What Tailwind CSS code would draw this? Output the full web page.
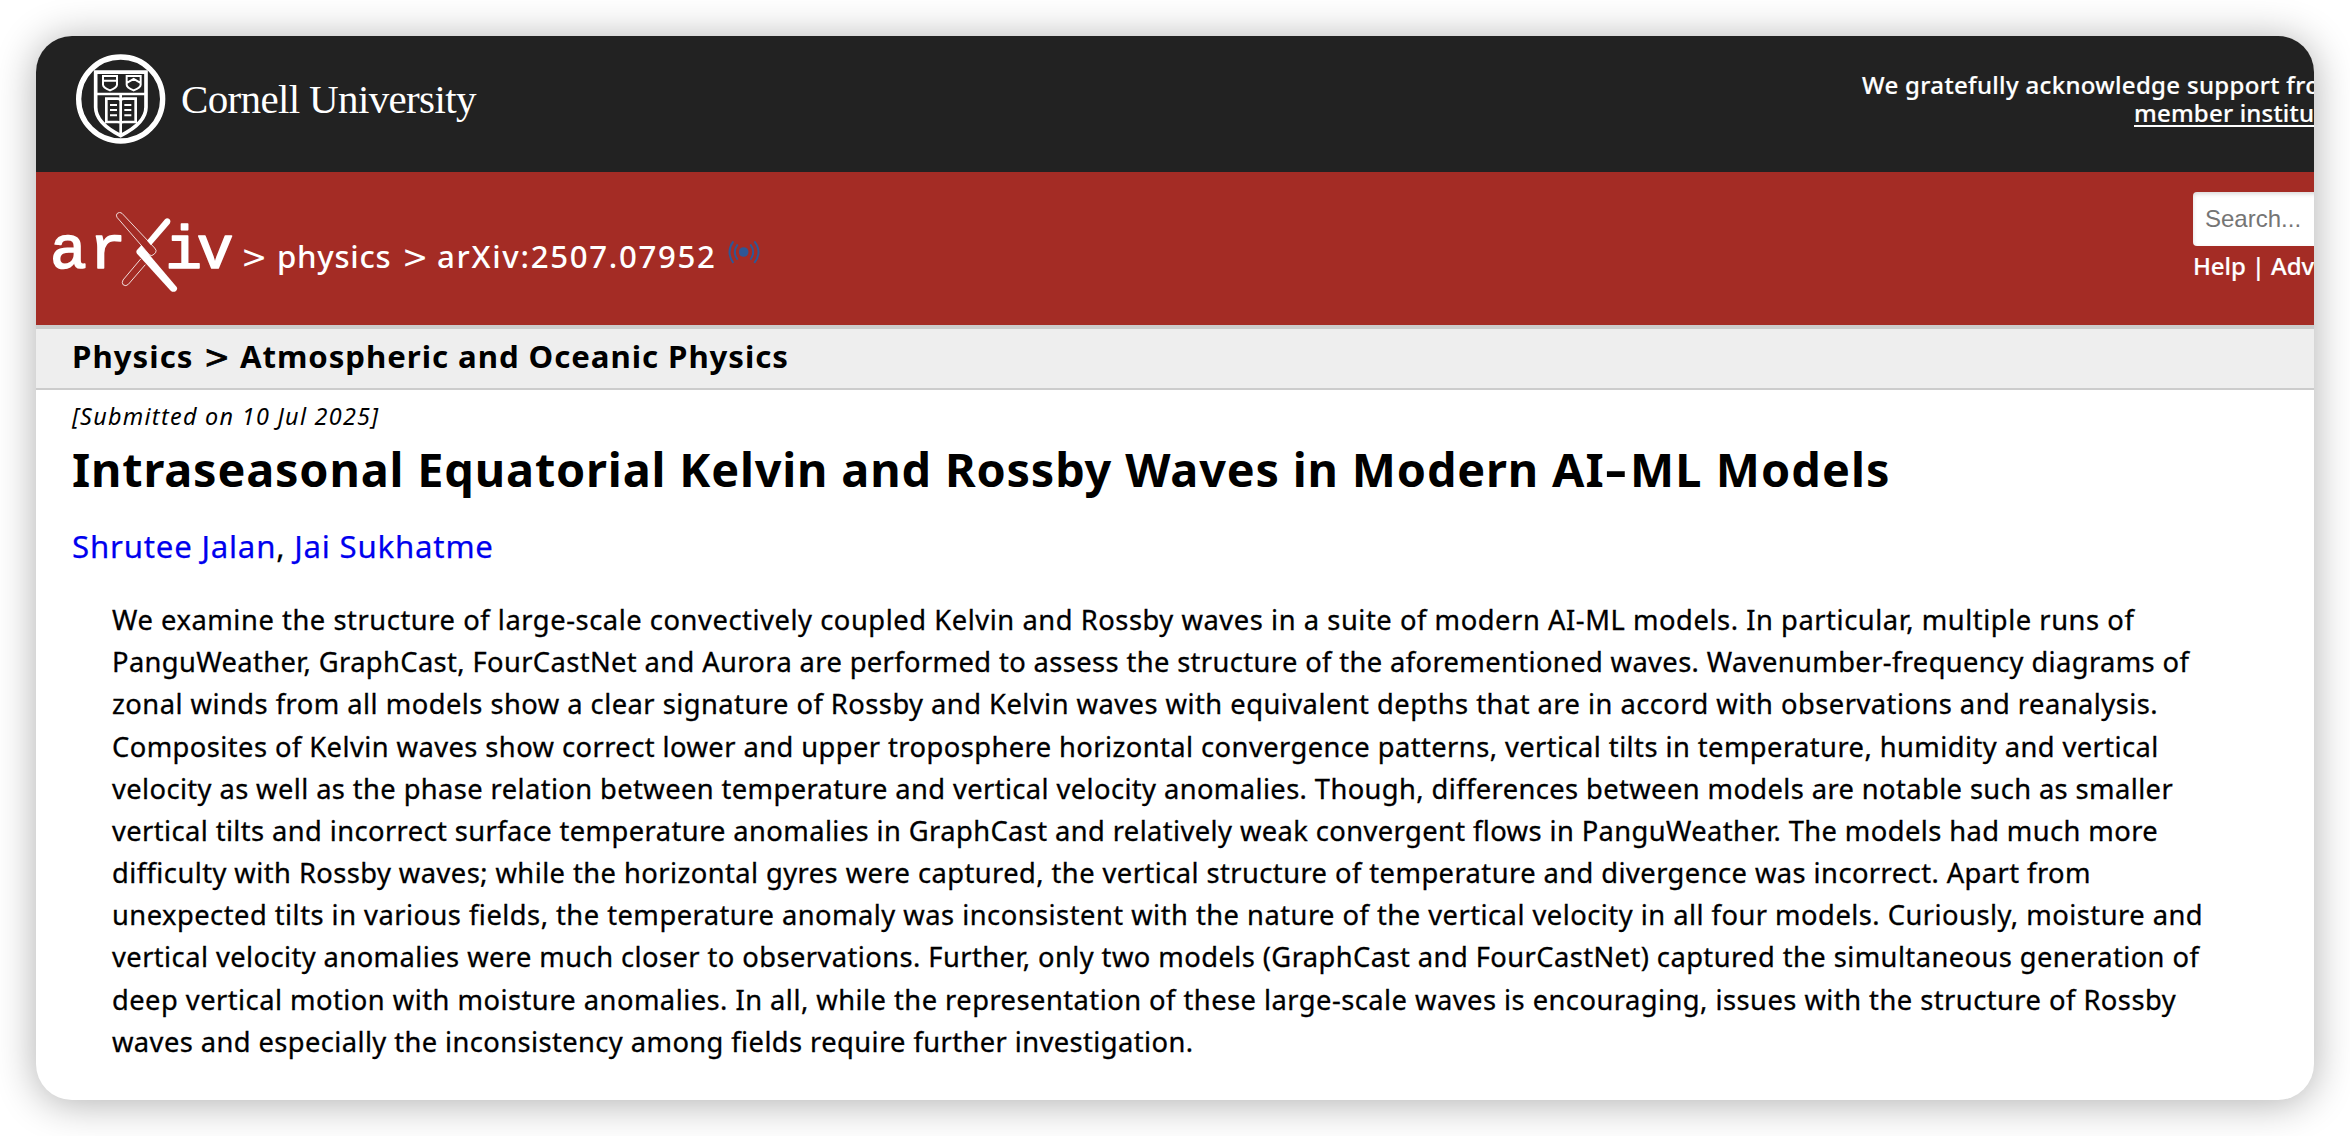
<!DOCTYPE html>
<html lang="en">
<head>
<meta charset="utf-8">
<title>[2507.07952] Intraseasonal Equatorial Kelvin and Rossby Waves in Modern AI-ML Models</title>
<script src="https://cdn.jsdelivr.net/npm/@tailwindcss/browser@4"></script>
</head>
<body class="bg-white w-[2350px] h-[1136px] p-9 overflow-hidden font-['Noto_Sans','Open_Sans',sans-serif] text-black">
<main class="w-[2278px] h-[1064px] rounded-[36px] overflow-hidden bg-white shadow-[0_3px_40px_rgba(0,0,0,0.32)]">

  <!-- University banner -->
  <header class="h-[136px] bg-[#222222] text-white flex justify-between items-start">
    <a class="flex items-start pl-10 pt-[18px]">
      <svg class="w-[90px] h-[90px]" viewBox="0 0 270 270" fill="none" stroke="#fff">
        <circle cx="134" cy="135" r="126" stroke-width="16"/>
        <path stroke-width="11" d="M59 54.500H210V160C210 195 180 222 134 245C88 222 59 195 59 160Z"/>
        <path stroke-width="8" d="M59 120H210M134 122V245"/>
        <path stroke-width="6" d="M81 66H123V92C123 99 112 105 102 109C92 105 81 99 81 92ZM81 80H123M152 66H194V92C194 99 183 105 173 109C163 105 152 99 152 92ZM154 86L173 75L192 86"/>
        <path stroke-width="8" d="M91 134H124Q134 134 134 141Q134 134 144 134H179V204H144Q134 204 134 208Q134 204 124 204H91Z"/>
        <path stroke-width="6" d="M102 153H123M102 168H123M102 184H123M145 153H166M145 168H166M145 184H166"/>
      </svg>
      <span class="mt-[25px] ml-[15px] text-[41px] leading-10 tracking-[-0.640px] font-['Liberation_Serif',serif]">Cornell University</span>
    </a>
    <div class="w-[452px] pt-[35px] text-2xl leading-7 whitespace-nowrap font-medium [-webkit-text-stroke:0.2px_#fff]">
      <p class="tracking-[0.330px]">We gratefully acknowledge support from</p>
      <p class="pl-[272px] leading-7"><a class="tracking-[0.2px] underline decoration-2 underline-offset-[3px] [text-decoration-skip-ink:none]">member institutions</a></p>
    </div>
  </header>

  <!-- Site bar -->
  <div class="h-[153px] bg-[#a42c25] text-white flex justify-between items-start">
    <div class="flex items-start pl-4 pt-10">
      <svg class="w-[185px] h-[84px]" viewBox="60 66 555 252" fill="#fff">
        <text y="233" x="54 172 400 494" font-family="'Liberation Mono', monospace" font-size="184" stroke="#fff" stroke-width="5" stroke-linejoin="round">ariv</text>
        <path d="M345 152L399 88Q405 82 412 87Q418 93 413 101L357 166Z"/>
        <path d="M328 166L434 291Q438 298 431 304Q423 308 416 302L315 191Q311 185 315 180Z"/>
        <path fill="none" stroke="#fff" stroke-width="2.500" d="M270 70L368 174Q375 181 371 188L363 195Q358 199 352 194L255 82Q251 75 256 70Q263 64 270 70ZM326 207L273 270Q268 279 274 285Q282 290 289 283L340 224"/>
      </svg>
      <div class="flex items-baseline pt-[24px] text-[31.200px] leading-10 font-medium">
        <span class="font-['DejaVu_Sans'] font-normal ml-[4px] w-[36px]">&gt;</span>
        <a class="w-[125px] tracking-[0.7px]">physics</a>
        <span class="font-['DejaVu_Sans'] font-normal w-[35px]">&gt;</span>
        <span class="tracking-[1.700px]">arXiv:2507.07952</span>
      </div>
      <svg class="mt-[28px] ml-[10px] w-[34px] h-[24px]" viewBox="980 119 102 72" fill="none" stroke="#2f5795" stroke-width="6">
        <circle cx="1030" cy="155" r="14.500" fill="#2f5795" stroke="none"/>
        <path d="M999 123Q976 155 999 188M1012 132Q995 155 1012 178M1062 123Q1087 155 1062 188M1050 132Q1067 155 1050 178"/>
      </svg>
    </div>
    <div class="w-[121px] pt-5 whitespace-nowrap">
      <div class="w-[320px] h-[54px] rounded-[4px] bg-white pl-3 shadow-[inset_0_2px_4px_rgba(10,10,10,0.15)] text-[#757575] text-2xl leading-[53px] font-['Liberation_Sans',sans-serif]">Search...</div>
      <p class="mt-[6px] text-2xl leading-7 font-medium tracking-[-0.1px] [-webkit-text-stroke:0.2px_#fff]">Help | Advanced Search</p>
    </div>
  </div>

  <!-- Subject -->
  <div class="h-[65px] border-t-4 border-b-2 border-[#cccccc] bg-[#eeeeee] pl-9">
    <h1 class="flex items-baseline text-[31.200px] leading-[54px] font-bold whitespace-pre"><span class="tracking-[1.050px]">Physics </span><span class="mx-px font-['DejaVu_Sans'] font-normal [-webkit-text-stroke:0.8px_#000]">&gt;</span><span class="tracking-[0.950px]"> Atmospheric and Oceanic Physics</span></h1>
  </div>

  <!-- Paper -->
  <article class="pt-3 pl-9 whitespace-nowrap">
    <p class="text-[23.400px] leading-7 italic tracking-[1.280px]">[Submitted on 10 Jul 2025]</p>
    <h2 class="mt-[9px] text-[46.800px] leading-[60px] font-bold"><span class="tracking-[0.830px]">Intraseasonal Equatorial Kelvin and Rossby Waves in Modern </span><span class="tracking-[1.100px]">AI<span class="inline-block origin-left scale-x-[1.450] mr-[9px]">-</span>ML Models</span></h2>
    <p class="mt-[27px] text-[31.200px] leading-10 tracking-[0.790px] [-webkit-text-stroke:0.25px]"><a class="text-[#0000ee]">Shrutee Jalan</a>, <a class="text-[#0000ee]">Jai Sukhatme</a></p>
    <div class="mt-[33px] pl-10 text-[27.300px] leading-[42.170px] [-webkit-text-stroke:0.3px_#000]">
      <p class="tracking-[0.558px]">We examine the structure of large-scale convectively coupled Kelvin and Rossby waves in a suite of modern AI-ML models. In particular, multiple runs of</p>
      <p class="tracking-[0.387px]">PanguWeather, GraphCast, FourCastNet and Aurora are performed to assess the structure of the aforementioned waves. Wavenumber-frequency diagrams of</p>
      <p class="tracking-[0.473px]">zonal winds from all models show a clear signature of Rossby and Kelvin waves with equivalent depths that are in accord with observations and reanalysis.</p>
      <p class="tracking-[0.437px]">Composites of Kelvin waves show correct lower and upper troposphere horizontal convergence patterns, vertical tilts in temperature, humidity and vertical</p>
      <p class="tracking-[0.400px]">velocity as well as the phase relation between temperature and vertical velocity anomalies. Though, differences between models are notable such as smaller</p>
      <p class="tracking-[0.406px]">vertical tilts and incorrect surface temperature anomalies in GraphCast and relatively weak convergent flows in PanguWeather. The models had much more</p>
      <p class="tracking-[0.439px]">difficulty with Rossby waves; while the horizontal gyres were captured, the vertical structure of temperature and divergence was incorrect. Apart from</p>
      <p class="tracking-[0.483px]">unexpected tilts in various fields, the temperature anomaly was inconsistent with the nature of the vertical velocity in all four models. Curiously, moisture and</p>
      <p class="tracking-[0.433px]">vertical velocity anomalies were much closer to observations. Further, only two models (GraphCast and FourCastNet) captured the simultaneous generation of</p>
      <p class="tracking-[0.471px]">deep vertical motion with moisture anomalies. In all, while the representation of these large-scale waves is encouraging, issues with the structure of Rossby</p>
      <p class="tracking-[0.415px]">waves and especially the inconsistency among fields require further investigation.</p>
    </div>
  </article>
</main>
</body>
</html>
